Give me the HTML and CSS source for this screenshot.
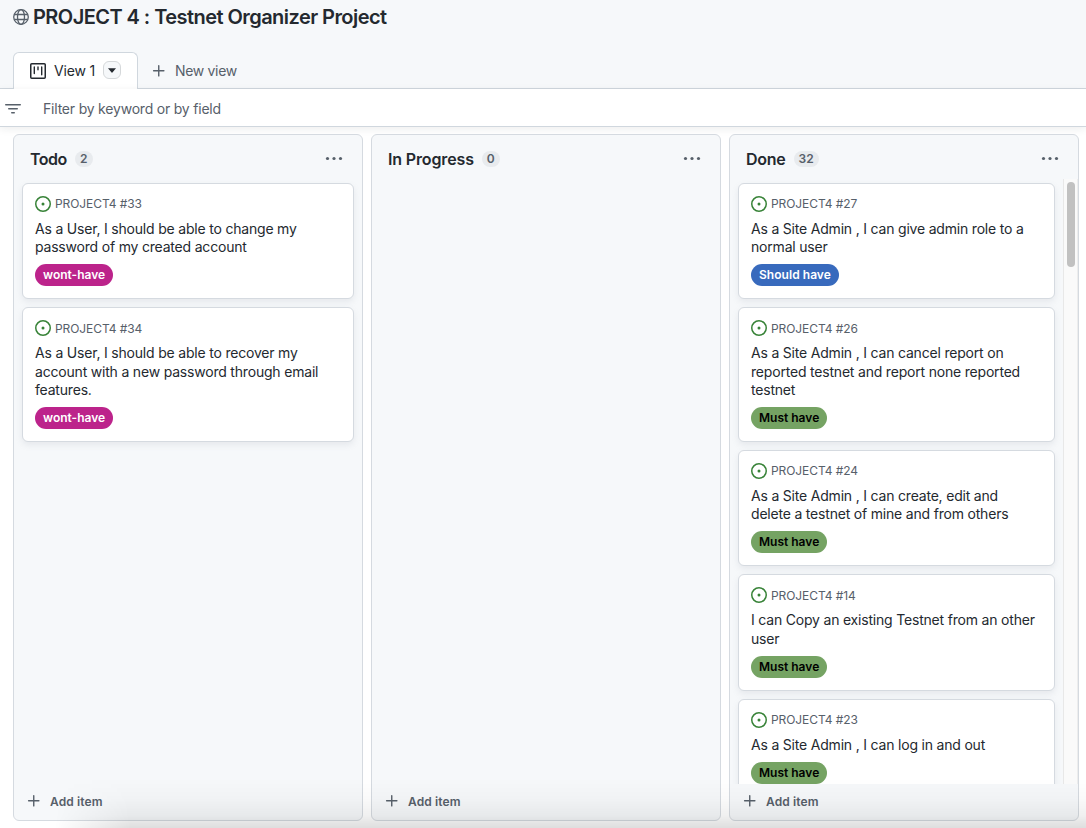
FILE: index.html
```html
<!DOCTYPE html>
<html lang="en">
<head>
<meta charset="utf-8">
<title>PROJECT 4 : Testnet Organizer Project</title>
<link rel="stylesheet" href="styles.css">
</head>
<body>
<svg class="defs" width="0" height="0" aria-hidden="true">
  <symbol id="open" viewBox="0 0 16 16"><path d="M8 9.5a1.5 1.5 0 1 0 0-3 1.5 1.5 0 0 0 0 3Z"/><path d="M8 0a8 8 0 1 1 0 16A8 8 0 0 1 8 0ZM1.5 8a6.5 6.5 0 1 0 13 0 6.5 6.5 0 0 0-13 0Z"/></symbol>
  <symbol id="plus" viewBox="0 0 16 16"><path d="M7.750 2.600v10.300M2.600 7.750h10.300" fill="none" stroke="currentColor" stroke-width="1.400" stroke-linecap="round"/></symbol>
  <symbol id="dots" viewBox="0 0 18 16"><circle cx="2.500" cy="7.500" r="1.600"/><circle cx="9" cy="7.500" r="1.600"/><circle cx="15.500" cy="7.500" r="1.600"/></symbol>
</svg>

<header class="header">
  <div class="title-row">
    <svg class="globe" width="16" height="16" viewBox="0 0 16 16"><g fill="none" stroke="currentColor" stroke-width="1.300"><circle cx="8" cy="8" r="7.300"/><ellipse cx="8" cy="8" rx="3.500" ry="7.300"/><path d="M1.300 5.500h13.400M1.300 10.500h13.400"/></g></svg>
    <h1 class="title">PROJECT 4 : Testnet Organizer Project</h1>
  </div>
  <nav class="tabs">
    <div class="tab">
      <svg width="16" height="16" viewBox="0 0 16 16"><g fill="none" stroke="currentColor" stroke-width="1.500"><rect x=".75" y=".75" width="14.500" height="14.500" rx="1"/><path d="M4.300 4v6.500M8 4v2.800M11.700 4v7.800" stroke-width="1.400" stroke-linecap="round"/></g></svg>
      <span class="tab-name">View 1</span>
      <button class="tab-menu"><svg width="10" height="5" viewBox="0 0 10 5"><path d="M1 .2h8L5.400 4.500q-.4.400-.8 0Z"/></svg></button>
    </div>
    <div class="new-view"><svg width="16" height="16"><use href="#plus"/></svg><span>New view</span></div>
  </nav>
</header>

<div class="filter">
  <svg width="16" height="16" viewBox="0 0 16 16"><path d="M.75 3h14.500a.75.75 0 0 1 0 1.500H.75a.75.75 0 0 1 0-1.500ZM3 7.750A.75.75 0 0 1 3.750 7h8.500a.75.75 0 0 1 0 1.500h-8.500A.75.75 0 0 1 3 7.750Zm3 4a.75.75 0 0 1 .75-.75h2.500a.75.75 0 0 1 0 1.500h-2.500a.75.75 0 0 1-.75-.75Z"/></svg>
  <span>Filter by keyword or by field</span>
</div>

<main class="board">
  <section class="column">
    <div class="col-head"><h2>Todo</h2><span class="count">2</span><svg class="more" width="18" height="16"><use href="#dots"/></svg></div>
    <div class="cards">
      <article class="card">
        <div class="ref"><svg width="16" height="16"><use href="#open"/></svg><span>PROJECT4 #33</span></div>
        <p>As a User, I should be able to change my<br>password of my created account</p>
        <span class="label wont">wont-have</span>
      </article>
      <article class="card">
        <div class="ref"><svg width="16" height="16"><use href="#open"/></svg><span>PROJECT4 #34</span></div>
        <p>As a User, I should be able to recover my<br>account with a new password through email<br>features.</p>
        <span class="label wont">wont-have</span>
      </article>
    </div>
    <div class="add"><svg width="16" height="16"><use href="#plus"/></svg><span>Add item</span></div>
  </section>

  <section class="column">
    <div class="col-head"><h2 class="wide">In Progress</h2><span class="count">0</span><svg class="more" width="18" height="16"><use href="#dots"/></svg></div>
    <div class="cards"></div>
    <div class="add"><svg width="16" height="16"><use href="#plus"/></svg><span>Add item</span></div>
  </section>

  <section class="column">
    <div class="col-head"><h2 class="done">Done</h2><span class="count">32</span><svg class="more" width="18" height="16"><use href="#dots"/></svg></div>
    <div class="scroller">
      <div class="cards">
        <article class="card">
          <div class="ref"><svg width="16" height="16"><use href="#open"/></svg><span>PROJECT4 #27</span></div>
          <p>As a Site Admin , I can give admin role to a<br>normal user</p>
          <span class="label should">Should have</span>
        </article>
        <article class="card">
          <div class="ref"><svg width="16" height="16"><use href="#open"/></svg><span>PROJECT4 #26</span></div>
          <p>As a Site Admin , I can cancel report on<br>reported testnet and report none reported<br>testnet</p>
          <span class="label must">Must have</span>
        </article>
        <article class="card">
          <div class="ref"><svg width="16" height="16"><use href="#open"/></svg><span>PROJECT4 #24</span></div>
          <p>As a Site Admin , I can create, edit and<br>delete a testnet of mine and from others</p>
          <span class="label must">Must have</span>
        </article>
        <article class="card">
          <div class="ref"><svg width="16" height="16"><use href="#open"/></svg><span>PROJECT4 #14</span></div>
          <p>I can Copy an existing Testnet from an other<br>user</p>
          <span class="label must">Must have</span>
        </article>
        <article class="card">
          <div class="ref"><svg width="16" height="16"><use href="#open"/></svg><span>PROJECT4 #23</span></div>
          <p>As a Site Admin , I can log in and out</p>
          <span class="label must">Must have</span>
        </article>
      </div>
      <div class="track"><div class="thumb"></div></div>
    </div>
    <div class="add"><svg width="16" height="16"><use href="#plus"/></svg><span>Add item</span></div>
  </section>
</main>
<div class="bottom-shade"></div>
</body>
</html>
```
FILE: styles.css
```css
* { box-sizing: border-box; }
body {
  margin: 0;
  height: 828px;
  overflow: hidden;
  position: relative;
  display: flex;
  flex-direction: column;
  background: #fff;
  color: #24292f;
  font: 14px/18.35px Inter, "Liberation Sans", sans-serif;
  letter-spacing: -0.195px;
}
svg { display: block; flex: none; fill: currentColor; }
.defs { position: absolute; }
h1, h2, p { margin: 0; }

.header {
  flex: none;
  height: 89px;
  display: flex;
  flex-direction: column;
  justify-content: space-between;
  background: #f6f8fa;
  box-shadow: inset 0 -1px #d0d7de;
}
.title-row {
  display: flex;
  align-items: center;
  gap: 4px;
  height: 34px;
  padding-left: 13px;
}
.globe { color: #57606a; }
.title { font-size: 20px; line-height: 34px; font-weight: 600; letter-spacing: -0.55px; }
.tabs { display: flex; height: 37px; padding-left: 13px; }
.tab {
  width: 125px;
  display: flex;
  align-items: center;
  padding: 0 0 0 16px;
  background: #fff;
  border: 1px solid #d0d7de;
  border-bottom: 0;
  border-radius: 6px 6px 0 0;
}
.tab-name { width: 42px; margin-left: 8px; letter-spacing: -0.15px; white-space: nowrap; }
.tab-menu {
  display: grid;
  place-items: center;
  width: 18px;
  height: 18px;
  margin: 0 0 2px 7px;
  padding: 0;
  color: #24292f;
  background: #f6f8fa;
  border: 1px solid #d5d8da;
  border-radius: 6px;
}
.new-view {
  display: flex;
  align-items: center;
  gap: 8px;
  padding-left: 13px;
  color: #57606a;
  letter-spacing: -0.33px;
}
.new-view span, .filter span { padding-top: 2px; }

.filter {
  flex: none;
  height: 38px;
  display: flex;
  align-items: center;
  gap: 22px;
  padding: 2px 0 0 5px;
  color: #57606a;
  letter-spacing: -0.205px;
  border-bottom: 1px solid #d0d7de;
  box-shadow: 0 2px 8px rgba(31, 35, 40, .08);
}

.board { flex: 1; min-height: 0; display: flex; gap: 8px; padding: 7px 0 7px 13px; }
.column {
  width: 350px;
  flex: none;
  display: flex;
  flex-direction: column;
  min-height: 0;
  background: #f6f8fa;
  border: 1px solid #d5dae0;
  border-radius: 6px;
}
.col-head { flex: none; display: flex; align-items: center; height: 44px; padding: 4px 19px 0 16px; }
.col-head h2 { font-size: 16px; line-height: 24px; font-weight: 600; letter-spacing: -0.5px; }
.col-head h2.wide { letter-spacing: -0.14px; }
.col-head h2.done { letter-spacing: -0.25px; }
.count {
  min-width: 18px;
  height: 16px;
  margin-left: 8px;
  padding: 0 5px;
  border-radius: 8px;
  background: #e8ebee;
  color: #57606a;
  font-size: 12px;
  line-height: 16px;
  font-weight: 600;
  letter-spacing: 0;
  text-align: center;
}
.more { margin-left: auto; color: #57606a; }
.scroller { flex: 1; min-height: 0; display: flex; overflow: hidden; }
.cards { flex: 1; min-width: 0; display: flex; flex-direction: column; gap: 8px; padding: 4px 8px 0; }
.card {
  flex: none;
  padding: 12px 12px 12.15px;
  background: #fff;
  border: 1px solid #d5dae0;
  border-radius: 6px;
  box-shadow: 0 3px 6px rgba(140, 149, 159, .15);
}
.ref {
  display: flex;
  align-items: center;
  gap: 4px;
  height: 16px;
  color: #57606a;
  font-size: 12px;
  line-height: 16px;
  letter-spacing: -0.08px;
}
.ref span { padding-top: .5px; }
.ref svg { color: #388338; }
.card p { margin: 8px 0 7.5px; }
.label {
  display: block;
  width: max-content;
  height: 22px;
  padding: 0 8px;
  border-radius: 11px;
  font-size: 12px;
  line-height: 22px;
  font-weight: 600;
  letter-spacing: 0;
}
.wont { background: #bc238b; color: #fff; }
.should { background: #386abd; color: #fff; letter-spacing: .04px; }
.must { background: #75a363; color: #000; }
.track {
  width: 15px;
  flex: none;
  padding: 3px;
  background: #fafafa;
  border-left: 1px solid #e8e8e8;
  border-right: 1px solid #ededed;
}
.thumb { width: 8px; height: 85px; border-radius: 4px; background: #c1c1c1; }
.add {
  flex: none;
  display: flex;
  align-items: center;
  gap: 8px;
  height: 36px;
  margin-top: auto;
  padding: 0 0 2px 12px;
  color: #57606a;
  font-size: 12px;
  font-weight: 600;
  letter-spacing: 0.11px;
}
.add span { padding-top: 3px; }

.bottom-shade {
  position: absolute;
  left: 55px;
  right: 0;
  bottom: 0;
  height: 50px;
  pointer-events: none;
  background: linear-gradient(transparent, rgba(0, 0, 0, .018) 40%, rgba(0, 0, 0, .06) 75%, rgba(0, 0, 0, .13));
  -webkit-mask-image: linear-gradient(90deg, transparent, #000 75px);
  mask-image: linear-gradient(90deg, transparent, #000 75px);
}
```
